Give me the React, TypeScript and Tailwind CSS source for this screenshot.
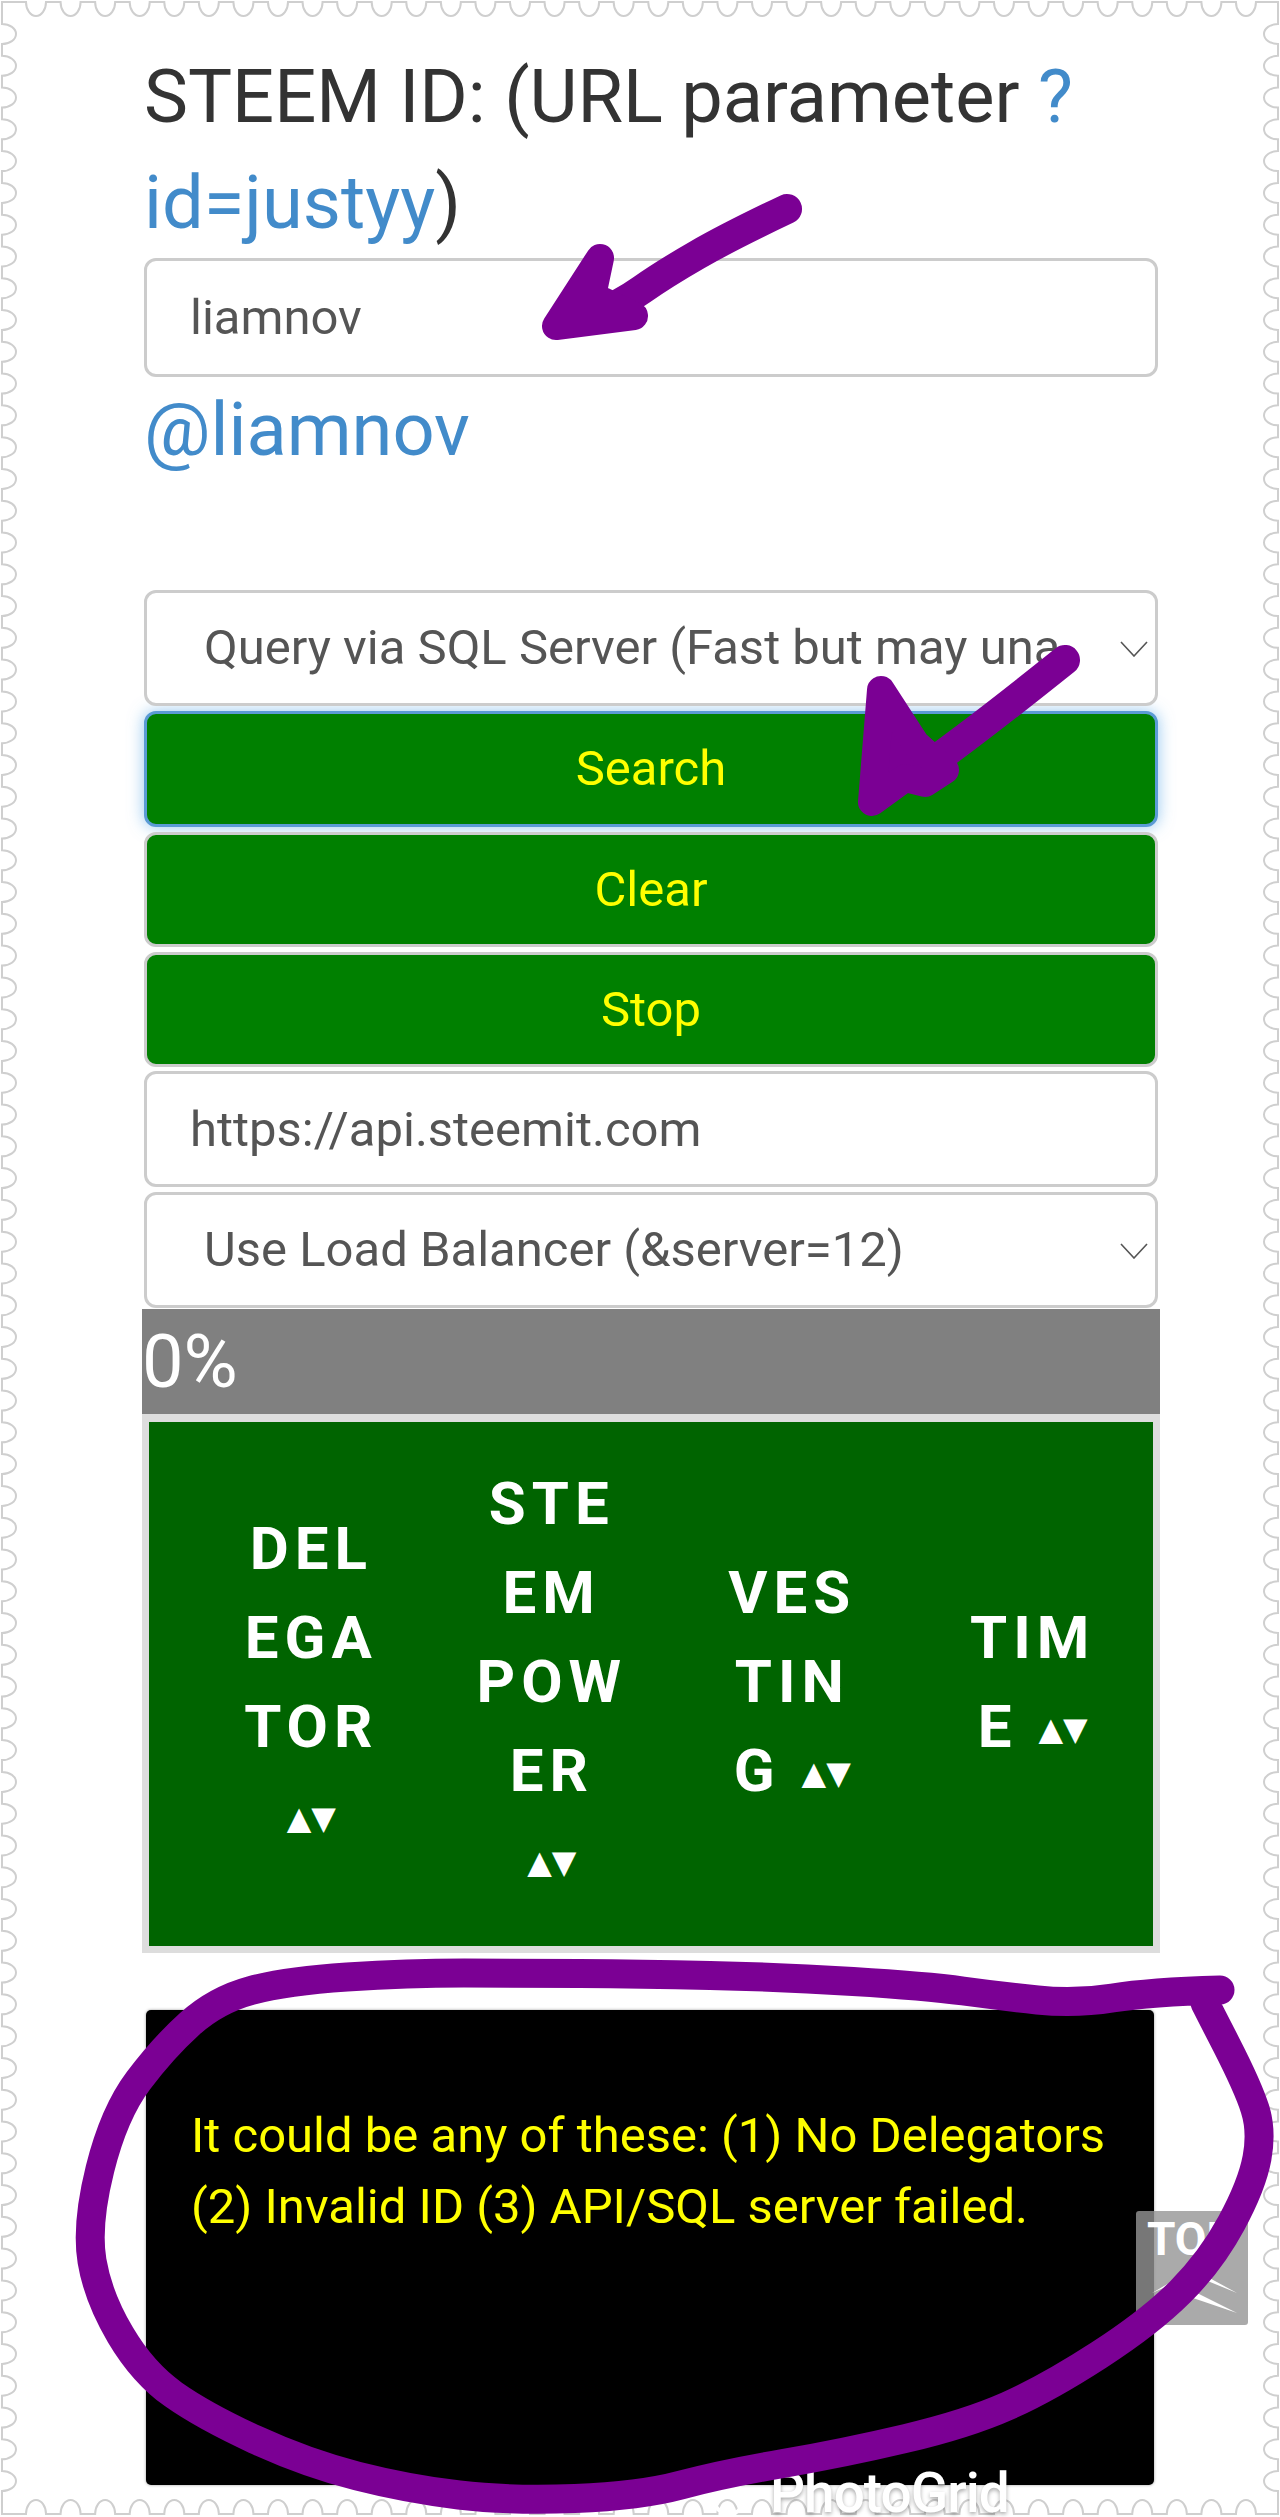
import React from "react";

// stamp-like scalloped edge, drawn clockwise with the bumps facing inwards
function stampPath() {
  const L = 2, T = 2, R = 1278, B = 2514;
  const xCount = 36, xPitch = 34.57, xStart = 26, w = 20;
  const yCount = 78, yPitch = 31.78, yStart = 24, h = 20;
  let d = `M${L} ${T}`;
  for (let i = 0; i < xCount; i++) {
    const x = xStart + i * xPitch;
    d += ` L${x} ${T} A10 14 0 0 0 ${x + w} ${T}`;
  }
  d += ` L${R} ${T}`;
  for (let i = 0; i < yCount; i++) {
    const y = yStart + i * yPitch;
    d += ` L${R} ${y} A14 10 0 0 0 ${R} ${y + h}`;
  }
  d += ` L${R} ${B}`;
  for (let i = xCount - 1; i >= 0; i--) {
    const x = xStart + i * xPitch;
    d += ` L${x + w} ${B} A10 14 0 0 0 ${x} ${B}`;
  }
  d += ` L${L} ${B}`;
  for (let i = yCount - 1; i >= 0; i--) {
    const y = yStart + i * yPitch;
    d += ` L${L} ${y + h} A14 10 0 0 0 ${L} ${y}`;
  }
  return d + " Z";
}

// freehand line through the points, midpoints joined by quadratic curves
function smooth(points: number[][]) {
  let d = `M${points[0][0]} ${points[0][1]}`;
  for (let i = 1; i < points.length - 1; i++) {
    const [x, y] = points[i];
    const [nx, ny] = points[i + 1];
    d += ` Q${x} ${y} ${(x + nx) / 2} ${(y + ny) / 2}`;
  }
  const last = points[points.length - 1];
  return d + ` L${last[0]} ${last[1]}`;
}

const loop = [
  [1220, 1990], [1150, 1992], [1075, 2004], [1000, 1996], [926, 1986], [780, 1977], [640, 1974],
  [520, 1973], [408, 1973], [286, 1981], [216, 2000], [163, 2048], [114, 2113], [86, 2225],
  [98, 2297], [143, 2373], [204, 2416], [306, 2463], [408, 2489], [510, 2501], [640, 2496],
  [722, 2474], [844, 2453], [967, 2424], [1048, 2388], [1150, 2322], [1211, 2261], [1252, 2185],
  [1262, 2131], [1248, 2087], [1205, 2003],
];

function Chevron() {
  return (
    <svg viewBox="0 0 28 16" className="absolute right-[10px] top-[51px] w-[28px] h-[16px] pointer-events-none">
      <path d="M1 1 L14 15 L27 1" fill="none" stroke="#555" strokeWidth="1.6" />
    </svg>
  );
}

function SelectBox({ value }: { value: string }) {
  return (
    <div className="relative">
      <select
        defaultValue={value}
        className="block w-full h-[116px] appearance-none bg-white border-[3px] border-[#ccc] rounded-[12px] pl-[57px] pr-[95px] text-[49px] text-[#555] outline-none"
      >
        <option>{value}</option>
      </select>
      <Chevron />
    </div>
  );
}

function GreenButton({ label, focused }: { label: string; focused?: boolean }) {
  return (
    <button
      className={
        focused
          ? "block w-full h-[116px] bg-[#008000] text-[#ffff00] text-[49px] rounded-[12px] border-[3px] border-[#5b9bd5] shadow-[0_0_16px_rgba(102,175,233,0.7)]"
          : "block w-full h-[115px] bg-[#008000] text-[#ffff00] text-[49px] rounded-[12px] border-[3px] border-[#ccc]"
      }
    >
      {label}
    </button>
  );
}

function Sort() {
  return (
    <span className="relative -top-[7px] font-['DejaVu_Sans',sans-serif] font-normal text-[32px] tracking-[0px]">▲▼</span>
  );
}

export default function App() {
  return (
    <div className="relative w-[1280px] h-[2517px] overflow-hidden bg-white font-[Roboto,sans-serif]">
      <svg viewBox="0 0 1280 2517" className="absolute inset-0 w-[1280px] h-[2517px]">
        <path d={stampPath()} fill="none" stroke="#cfcfcf" strokeWidth="2" />
      </svg>

      <div className="relative ml-[144px] w-[1014px] pt-[44px]">
        <h3 className="text-[74px] leading-[106px] font-normal text-[#333]">
          STEEM ID: (URL parameter <a className="text-[#428bca]">?</a>
          <br />
          <a className="text-[#428bca]">id=justyy</a>)
        </h3>
        <input
          readOnly
          defaultValue="liamnov"
          className="block w-full h-[119px] mt-[2px] bg-white border-[3px] border-[#ccc] rounded-[12px] px-[43px] text-[49px] text-[#555] outline-none"
        />
        <div className="text-[74px] leading-[106px] text-[#428bca]">@liamnov</div>

        <div className="mt-[107px]">
          <SelectBox value="Query via SQL Server (Fast but may unavailable)" />
        </div>
        <div className="mt-[5px]">
          <GreenButton label="Search" focused />
        </div>
        <div className="mt-[5px]">
          <GreenButton label="Clear" />
        </div>
        <div className="mt-[5px]">
          <GreenButton label="Stop" />
        </div>
        <input
          readOnly
          defaultValue="https://api.steemit.com"
          className="block w-full h-[116px] mt-[4px] bg-white border-[3px] border-[#ccc] rounded-[12px] px-[43px] text-[49px] text-[#555] outline-none"
        />
        <div className="mt-[5px]">
          <SelectBox value="Use Load Balancer (&server=12)" />
        </div>

        <div className="-mx-[2px] mt-[1px] h-[105px] bg-[#808080] text-white text-[74px] leading-[105px]">0%</div>

        <div className="-mx-[2px] h-[539px] border-x-[7px] border-t-[8px] border-b-[7px] border-[#ddd] bg-[#006400] pl-[42px] pt-[5px]">
          <table className="w-full h-full table-fixed">
            <thead>
              <tr className="text-white text-[60px] font-bold leading-[89px] tracking-[6px] text-center">
                <th className="font-bold align-middle">
                  DEL<br />EGA<br />TOR<br /><Sort />
                </th>
                <th className="font-bold align-middle">
                  STE<br />EM<br />POW<br />ER<br /><Sort />
                </th>
                <th className="font-bold align-middle">
                  VES<br />TIN<br />G <Sort />
                </th>
                <th className="font-bold align-middle">
                  TIM<br />E <Sort />
                </th>
              </tr>
            </thead>
          </table>
        </div>

        <div className="mt-[57px] ml-[2px] mr-[4px] h-[475px] bg-black rounded-[5px] shadow-[0_0_3px_#999] pt-[90px] pl-[45px] pr-[30px] text-[#ffff00] text-[49px] leading-[71px]">
          It could be any of these: (1) No Delegators (2) Invalid ID (3) API/SQL server failed.
        </div>
      </div>

      {/* back to top button */}
      <div className="absolute left-[1136px] top-[2211px] w-[112px] h-[114px] rounded-[3px] bg-[rgba(149,149,149,0.8)] text-white">
        <div className="pl-[11px] pt-[1px] text-[46px] font-bold leading-[54px]">TOP</div>
        <svg viewBox="0 0 112 114" className="absolute inset-0 w-[112px] h-[114px]">
          <path d="M16 82 L57 58 L101 82 L57 64 Z M16 102 L57 80 L101 102 L57 87 Z" fill="#fff" />
        </svg>
      </div>

      {/* app watermark */}
      <div className="absolute left-[770px] top-[2469px] text-white text-[55px] font-medium leading-[48px] tracking-[-1px] [text-shadow:0_2px_4px_rgba(0,0,0,0.35)]">
        PhotoGrid
      </div>
      <div className="absolute left-[712px] top-[2482px] w-[34px] h-[34px] rounded-full border-[4px] border-white" />

      {/* hand-drawn marks on top of the screenshot */}
      <svg viewBox="0 0 1280 2517" className="absolute inset-0 w-[1280px] h-[2517px] pointer-events-none">
        <g fill="none" stroke="#7b0094" strokeLinecap="round" strokeLinejoin="round">
          <path d={smooth([[787, 209], [730, 236], [664, 274], [620, 305], [575, 322]])} strokeWidth="30" />
          <path d="M600 258 L556 326 L634 316 L592 296 Z" fill="#7b0094" strokeWidth="28" />
          <path d={smooth([[1065, 660], [1000, 712], [925, 768]])} strokeWidth="30" />
          <path d="M881 690 L872 802 L905 778 L925 783 L945 770 L916 744 Z" fill="#7b0094" strokeWidth="28" />
          <path d={smooth(loop)} strokeWidth="29" />
        </g>
      </svg>
    </div>
  );
}
